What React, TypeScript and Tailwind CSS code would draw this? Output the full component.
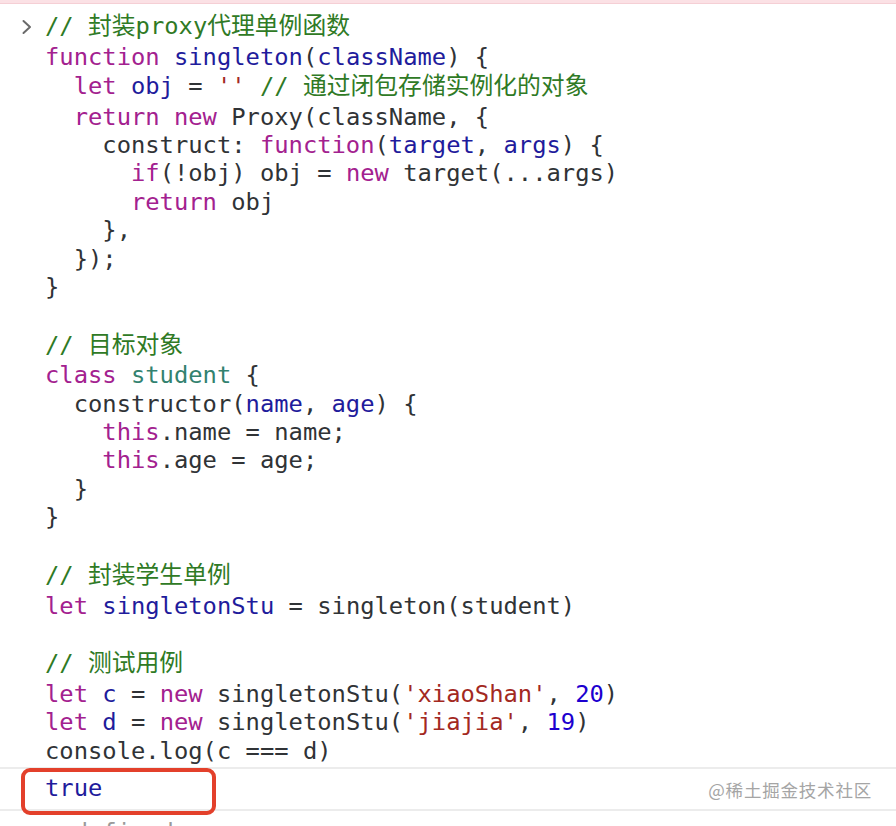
import React from 'react';

type Kind = 'k' | 'd' | 's' | 'n' | 'c' | 't' | 'p';
type Token = [Kind, string];

const colors: Record<Kind, string> = {
  k: 'text-[#a3218f]',
  d: 'text-[#1f1c9c]',
  s: 'text-[#a3291f]',
  n: 'text-[#1c00cf]',
  c: 'text-[#2f7a25]',
  t: 'text-[#33826f]',
  p: 'text-[#303336]',
};

// cjk = line holds a Chinese comment, which makes the row a bit taller
const lines: { cjk?: boolean; tokens: Token[] }[] = [
  { cjk: true, tokens: [['c', '// 封装proxy代理单例函数']] },
  { tokens: [['k', 'function'], ['p', ' '], ['d', 'singleton'], ['p', '('], ['d', 'className'], ['p', ') {']] },
  { cjk: true, tokens: [['p', '  '], ['k', 'let'], ['p', ' '], ['d', 'obj'], ['p', ' = '], ['s', "''"], ['p', ' '], ['c', '// 通过闭包存储实例化的对象']] },
  { tokens: [['p', '  '], ['k', 'return'], ['p', ' '], ['k', 'new'], ['p', ' Proxy(className, {']] },
  { tokens: [['p', '    construct: '], ['k', 'function'], ['p', '('], ['d', 'target'], ['p', ', '], ['d', 'args'], ['p', ') {']] },
  { tokens: [['p', '      '], ['k', 'if'], ['p', '(!obj) obj = '], ['k', 'new'], ['p', ' target(...args)']] },
  { tokens: [['p', '      '], ['k', 'return'], ['p', ' obj']] },
  { tokens: [['p', '    },']] },
  { tokens: [['p', '  });']] },
  { tokens: [['p', '}']] },
  { tokens: [] },
  { cjk: true, tokens: [['c', '// 目标对象']] },
  { tokens: [['k', 'class'], ['p', ' '], ['t', 'student'], ['p', ' {']] },
  { tokens: [['p', '  constructor('], ['d', 'name'], ['p', ', '], ['d', 'age'], ['p', ') {']] },
  { tokens: [['p', '    '], ['k', 'this'], ['p', '.name = name;']] },
  { tokens: [['p', '    '], ['k', 'this'], ['p', '.age = age;']] },
  { tokens: [['p', '  }']] },
  { tokens: [['p', '}']] },
  { tokens: [] },
  { cjk: true, tokens: [['c', '// 封装学生单例']] },
  { tokens: [['k', 'let'], ['p', ' '], ['d', 'singletonStu'], ['p', ' = singleton(student)']] },
  { tokens: [] },
  { cjk: true, tokens: [['c', '// 测试用例']] },
  { tokens: [['k', 'let'], ['p', ' '], ['d', 'c'], ['p', ' = '], ['k', 'new'], ['p', ' singletonStu('], ['s', "'xiaoShan'"], ['p', ', '], ['n', '20'], ['p', ')']] },
  { tokens: [['k', 'let'], ['p', ' '], ['d', 'd'], ['p', ' = '], ['k', 'new'], ['p', ' singletonStu('], ['s', "'jiajia'"], ['p', ', '], ['n', '19'], ['p', ')']] },
  { tokens: [['p', 'console.log(c === d)']] },
];

const mono = "font-['DejaVu_Sans_Mono','Noto_Sans_CJK_SC',monospace] text-[23.8px]";

export default function App() {
  return (
    <div className="relative w-[896px] h-[826px] overflow-hidden bg-white">
      {/* top strip of the previous (error) row */}
      <div className="h-[4px] bg-[#fbe1e5] border-b border-[#f5cfd5]" />

      {/* Input block */}
      <div className="flex pt-[7px]">
        <div className="w-[45px] shrink-0 pl-[21px] pt-[8px]">
          <svg width="12" height="16" viewBox="0 0 12 16" fill="none">
            <path d="M2.5 2l6.5 6-6.5 6" stroke="#6a6a6a" strokeWidth="2" strokeLinecap="round" strokeLinejoin="round" />
          </svg>
        </div>
        <div className={mono}>
          {lines.map((line, i) => (
            <div
              key={i}
              className={line.cjk ? 'whitespace-pre leading-[31.6px] h-[31.6px]' : 'whitespace-pre leading-[28.4px] h-[28.4px]'}
            >
              {line.tokens.map(([kind, text], j) => (
                <span key={j} className={colors[kind]}>{text}</span>
              ))}
            </div>
          ))}
        </div>
      </div>

      {/* Result row */}
      <div className="mt-[2px] border-t-2 border-[#ececec] h-[42px] flex items-center justify-between">
        <span className={`${mono} pl-[45px] text-[#1f1c9c]`}>true</span>
        <span className="pr-[24px] pt-[2px] font-['Noto_Sans_CJK_SC',sans-serif] text-[17.5px] text-[#a5a5a5] tracking-[0.8px]">
          @稀土掘金技术社区
        </span>
      </div>

      {/* undefined row, cut off by the window */}
      <div className="border-t-2 border-[#ececec] h-[40px] flex items-start pt-[4px]">
        <span className="w-[45px] pl-[20px] text-[#a0a0a0] text-[20px] font-['DejaVu_Sans',sans-serif]">‹·</span>
        <span className={`${mono} text-[#9a9a9a]`}>undefined</span>
      </div>

      {/* red annotation box */}
      <div className="absolute left-[21px] top-[768px] w-[195px] h-[47px] rounded-[9px] border-4 border-[#e3402b]" />
    </div>
  );
}
